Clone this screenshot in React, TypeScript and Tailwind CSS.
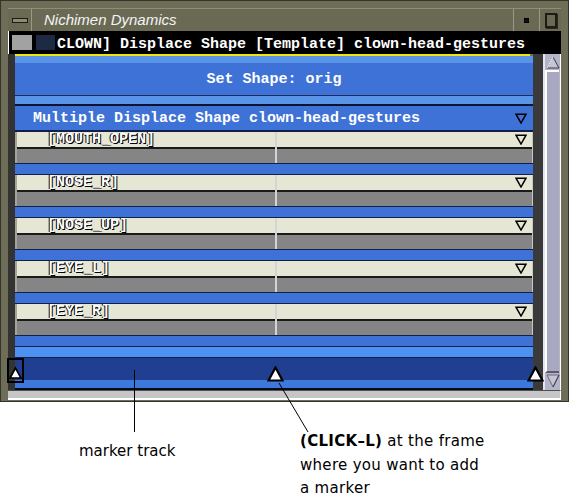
import React from "react";

const rows = ["[MOUTH_OPEN]", "[NOSE_R]", "[NOSE_UP]", "[EYE_L]", "[EYE_R]"];

function DownTri() {
  return (
    <svg width="12" height="11" viewBox="0 0 12 11" className="block">
      <polygon points="1,1.2 11,1.2 6,10" fill="none" stroke="#000" strokeWidth="1.5" />
    </svg>
  );
}

function Marker() {
  return (
    <svg width="17" height="16" viewBox="0 0 17 16" className="block">
      <polygon points="8.5,1.5 15.5,14.5 1.5,14.5" fill="#fff" stroke="#000" strokeWidth="2.2" strokeLinejoin="miter" />
    </svg>
  );
}

function Group({ label }: { label: string }) {
  return (
    <div className="flex flex-col">
      <div className="flex h-[31px]">
        <div className="w-[260px] flex flex-col border-l-2 border-[#a4a498]">
          <div className="h-[15px] bg-[#e6e6d4] flex items-center pl-[30px] text-[15px] leading-none text-white font-bold [text-shadow:1px_1px_0_#000,-1px_0_0_#000]">
            {label}
          </div>
          <div className="h-[2px] bg-[#1a1a1a]" />
          <div className="h-[14px] bg-[#858585]" />
        </div>
        <div className="w-[2px] bg-[#d4d4d4]" />
        <div className="flex-1 flex flex-col border-r border-[#c8c8c8]">
          <div className="h-[15px] bg-[#e6e6d4] flex items-center justify-end pr-[5px]">
            <DownTri />
          </div>
          <div className="h-[2px] bg-[#1a1a1a]" />
          <div className="h-[14px] bg-[#858585]" />
        </div>
      </div>
      <div className="h-[1px] bg-[#10204a]" />
      <div className="h-[10px] bg-[#3e72d6]" />
      <div className="h-[1px] bg-[#10204a]" />
    </div>
  );
}

export default function App() {
  return (
    <div className="relative w-[569px] h-[497px] bg-white overflow-hidden font-['Liberation_Mono',monospace]">
      {/* Window */}
      <div className="h-[402px] bg-[#6e6e58] border border-[#34342a] pt-[7px] px-[7px] flex flex-col">
        {/* Title bar */}
        <div className="h-[23px] flex items-stretch bg-[#6a6a54] border-t border-[#8e8e78]">
          <div className="w-[24px] flex items-center justify-center border-r border-[#9a9a84]">
            <div className="w-[16px] h-[5px] border border-[#1c1c14] bg-[#8c8c76]" />
          </div>
          <div className="pl-[12px] flex items-center text-[15px] italic text-[#f4f4f4] font-['Liberation_Sans',Arial,sans-serif]">
            Nichimen Dynamics
          </div>
          <div className="flex-1" />
          <div className="w-[26px] flex items-center justify-center border-l border-[#9a9a84]">
            <div className="w-[5px] h-[5px] bg-[#101010] border border-[#000]" />
          </div>
          <div className="w-[22px] flex items-center justify-center border-l border-[#9a9a84]">
            <div className="w-[12px] h-[15px] border-2 border-[#1c1c14] shadow-[1px_1px_0_#2a2a20]" />
          </div>
        </div>
        {/* Header */}
        <div className="h-[23px] bg-black border-l border-white flex items-center">
          <div className="ml-[3px] w-[20px] h-[15px] bg-[#a2a2a2]" />
          <div className="ml-[4px] w-[19px] h-[15px] bg-[#1c2a44]" />
          <div className="ml-[2px] pt-[3px] text-[15px] font-bold text-white whitespace-nowrap leading-none">
            CLOWN] Displace Shape [Template] clown-head-gestures
          </div>
        </div>
        {/* Body */}
        <div className="h-[336px] flex">
          <div className="w-[7px] bg-[#333333]" />
          <div className="w-[518px] flex flex-col">
            <div className="h-[2px] bg-[#f0e800] mr-[3px]" />
            <div className="h-[7px] bg-[#5a94e8]" />
            <div className="h-[32px] bg-[#3e72d6] flex items-center justify-center text-[15px] font-bold text-white leading-none">
              Set Shape: orig
            </div>
            <div className="h-[1px] bg-[#1c2c60]" />
            <div className="h-[8px] bg-[#5a94e8]" />
            <div className="h-[2px] bg-[#0c1430]" />
            <div className="h-[24px] bg-[#3e72d6] flex items-center justify-between pl-[18px] pr-[6px] text-[15px] font-bold text-white leading-none">
              <span>Multiple Displace Shape clown-head-gestures</span>
              <DownTri />
            </div>
            <div className="h-[2px] bg-[#10204a]" />
            {rows.map((r) => (
              <Group key={r} label={r} />
            ))}
            <div className="h-[10px] bg-[#4d92f2]" />
            <div className="h-[1px] bg-[#10204a]" />
            <div className="h-[22px] bg-[#203f90]" />
            <div className="h-[8px] bg-[#3d78dc]" />
            <div className="h-[2px] bg-[#0a0a14]" />
          </div>
          <div className="w-[10px] bg-[#3a3a3a]" />
          {/* Scrollbar */}
          <div className="w-[18px] flex flex-col bg-[#b4b4c8] border-l-2 border-[#e4e4ec] border-r border-r-white">
            <div className="h-[16px] flex items-end justify-center pb-[1px]">
              <svg width="14" height="13" viewBox="0 0 14 13" className="block">
                <polygon points="7,1 13,12 1,12" fill="#c4c4d4" stroke="#3a3a48" strokeWidth="1" />
                <line x1="1" y1="12" x2="7" y2="1" stroke="#fff" strokeWidth="1" />
              </svg>
            </div>
            <div className="flex-1 bg-[#a8a8c0] border-l-2 border-white border-t-2 border-t-white border-b-2 border-b-[#5a5a6a] mr-[1px]" />
            <div className="h-[17px] flex items-start justify-center pt-[1px]">
              <svg width="14" height="14" viewBox="0 0 14 14" className="block">
                <polygon points="1,1 13,1 7,13" fill="#c4c4d4" stroke="#6a6a78" strokeWidth="1" />
                <line x1="13" y1="1" x2="7" y2="13" stroke="#3a3a48" strokeWidth="1" />
              </svg>
            </div>
          </div>
        </div>
        {/* Bottom bar */}
        <div className="h-[10px] bg-[#c6c6c6] border-t border-[#505050] border-b-2 border-b-white border-r border-r-white" />
      </div>

      {/* Markers (overlay) */}
      <div className="absolute left-[7px] top-[358px] w-[17px] h-[25px] border-2 border-black flex items-end justify-center">
        <Marker />
      </div>
      <div className="absolute left-[267px] top-[366px]">
        <Marker />
      </div>
      <div className="absolute left-[527px] top-[366px]">
        <Marker />
      </div>

      {/* Annotation lines */}
      <svg className="absolute inset-0 pointer-events-none" width="569" height="497">
        <line x1="134.5" y1="370" x2="134.5" y2="432" stroke="#000" strokeWidth="1" />
        <line x1="279" y1="383" x2="308" y2="432" stroke="#000" strokeWidth="1" />
      </svg>

      {/* Annotations */}
      <div className="absolute left-0 top-[402px] w-[569px] h-[95px] flex font-['DejaVu_Sans',sans-serif] text-[15px] text-black">
        <div className="w-[300px] pl-[79px] pt-[37px] leading-[24px]">marker track</div>
        <div className="pt-[27px] leading-[24px] tracking-[0.3px]">
          <div>
            <span className="font-bold">(CLICK–L)</span> at the frame
          </div>
          <div>where you want to add</div>
          <div className="leading-[14px] pt-[4px]">a marker</div>
        </div>
      </div>
    </div>
  );
}
